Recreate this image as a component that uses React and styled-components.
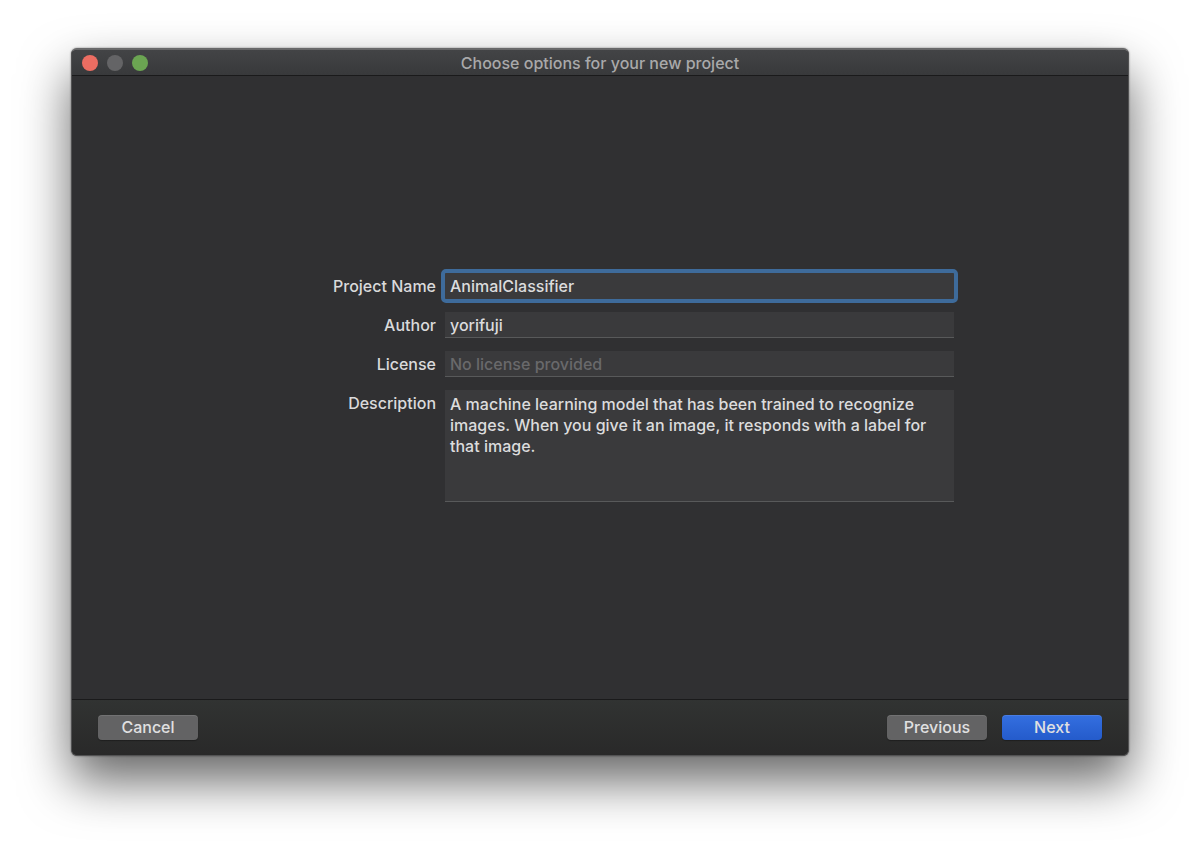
import styled, { createGlobalStyle } from "styled-components";

import { useState } from "react";

export default function NewProjectScreen() {
    const [name, setName] = useState("AnimalClassifier");
    const [author, setAuthor] = useState("yorifuji");
    const [license, setLicense] = useState("");
    const [description, setDescription] = useState(
        "A machine learning model that has been trained to recognize images. When you give it an image, it responds with a label for that image."
    );

    return (
        <>
            <GlobalStyle />
            <PageBody>
                <Window onSubmit={(e) => e.preventDefault()}>
                    <TitleBar>
                        <WindowControls>
                            <ControlDot type="button" aria-label="Close" $color="#ec6d62" />
                            <ControlDot type="button" aria-label="Minimize" $color="#646466" disabled />
                            <ControlDot type="button" aria-label="Zoom" $color="#6ba552" />
                        </WindowControls>
                        <Title>Choose options for your new project</Title>
                    </TitleBar>
                    <Content>
                        <Fields>
                            <Label htmlFor="name">Project Name</Label>
                            <Input id="name" $active value={name} onChange={(e) => setName(e.target.value)} />
                            <Label htmlFor="author">Author</Label>
                            <Input id="author" value={author} onChange={(e) => setAuthor(e.target.value)} />
                            <Label htmlFor="license">License</Label>
                            <Input id="license" placeholder="No license provided" value={license} onChange={(e) => setLicense(e.target.value)} />
                            <Label htmlFor="description">Description</Label>
                            <TextArea id="description" spellCheck={false} value={description} onChange={(e) => setDescription(e.target.value)} />
                        </Fields>
                    </Content>
                    <Footer>
                        <Button type="button">Cancel</Button>
                        <ButtonGroup>
                            <Button type="button">Previous</Button>
                            <Button type="submit" $primary>Next</Button>
                        </ButtonGroup>
                    </Footer>
                </Window>
            </PageBody>
        </>
    );
}

const GlobalStyle = createGlobalStyle`
    * {
        box-sizing: border-box;
    }
    body {
        margin: 0;
        background: #ffffff;
    }
    body, button, input, textarea {
        font-family: Inter, "Liberation Sans", sans-serif;
        font-size: 16px;
        font-weight: 500;
    }
`;

const PageBody = styled.div`
    min-height: 100vh;
    padding: 48px 71px 93px;
    display: flex;
    overflow: hidden;
`;

const Window = styled.form`
    flex: 1;
    display: flex;
    flex-direction: column;
    border-radius: 6px;
    background: #303032;
    overflow: hidden;
    border: 1px solid #525253;
    border-top: 2px solid #69696a;
    box-shadow: 0 25px 50px rgba(0, 0, 0, 0.6), 0 0 2px rgba(0, 0, 0, 0.5);
`;

const TitleBar = styled.header`
    height: 26px;
    display: grid;
    grid-template-columns: 1fr auto 1fr;
    align-items: center;
    padding: 0 10px;
    background: linear-gradient(#434446, #38393b);
    border-bottom: 1px solid #1a1a1b;
`;

const WindowControls = styled.div`
    display: flex;
    gap: 9px;
`;

const ControlDot = styled.button`
    width: 16px;
    height: 16px;
    padding: 0;
    border: none;
    border-radius: 50%;
    background: ${({ $color }) => $color};
`;

const Title = styled.h1`
    margin: 0;
    font-size: 16px;
    font-weight: 500;
    line-height: 20px;
    color: #a9a9aa;
`;

const Content = styled.main`
    flex: 1;
    display: flex;
    align-items: center;
    padding-right: 174px;
`;

const Fields = styled.div`
    flex: 1;
    display: grid;
    grid-template-columns: 364px 1fr;
    column-gap: 9px;
    row-gap: 13px;
`;

const Label = styled.label`
    text-align: right;
    line-height: 26px;
    color: #dadadb;
`;

const Input = styled.input`
    width: 100%;
    height: 26px;
    padding: 0 5px;
    border: none;
    border-bottom: 1px solid ${({ $active }) => ($active ? "#3a3a3c" : "#58595a")};
    outline: ${({ $active }) => ($active ? "4px solid #3e6b9b" : "none")};
    border-radius: ${({ $active }) => ($active ? "1px" : "0")};
    background: #3a3a3c;
    color: #dcdcdd;
    &::placeholder {
        color: #69696b;
    }
`;

const TextArea = styled.textarea`
    display: block;
    width: 100%;
    height: 112px;
    padding: 4px 5px;
    border: none;
    border-bottom: 1px solid #58595a;
    outline: none;
    resize: none;
    background: #3a3a3c;
    color: #dcdcdd;
    line-height: 21px;
`;

const Footer = styled.footer`
    height: 56px;
    display: flex;
    align-items: center;
    justify-content: space-between;
    padding: 0 26px;
    border-top: 1px solid #1a1a1b;
    background: linear-gradient(#313332, #292929);
`;

const ButtonGroup = styled.div`
    display: flex;
    gap: 15px;
`;

const Button = styled.button`
    width: 100px;
    height: 25px;
    padding: 0;
    border: none;
    border-radius: 4px;
    background: ${({ $primary }) => ($primary ? "linear-gradient(#346fe0, #245bcb)" : "#636364")};
    box-shadow: inset 0 1px 0 rgba(255, 255, 255, 0.1), 0 1px 1px rgba(0, 0, 0, 0.3);
    color: #e0e0e1;
    line-height: 25px;
`;
